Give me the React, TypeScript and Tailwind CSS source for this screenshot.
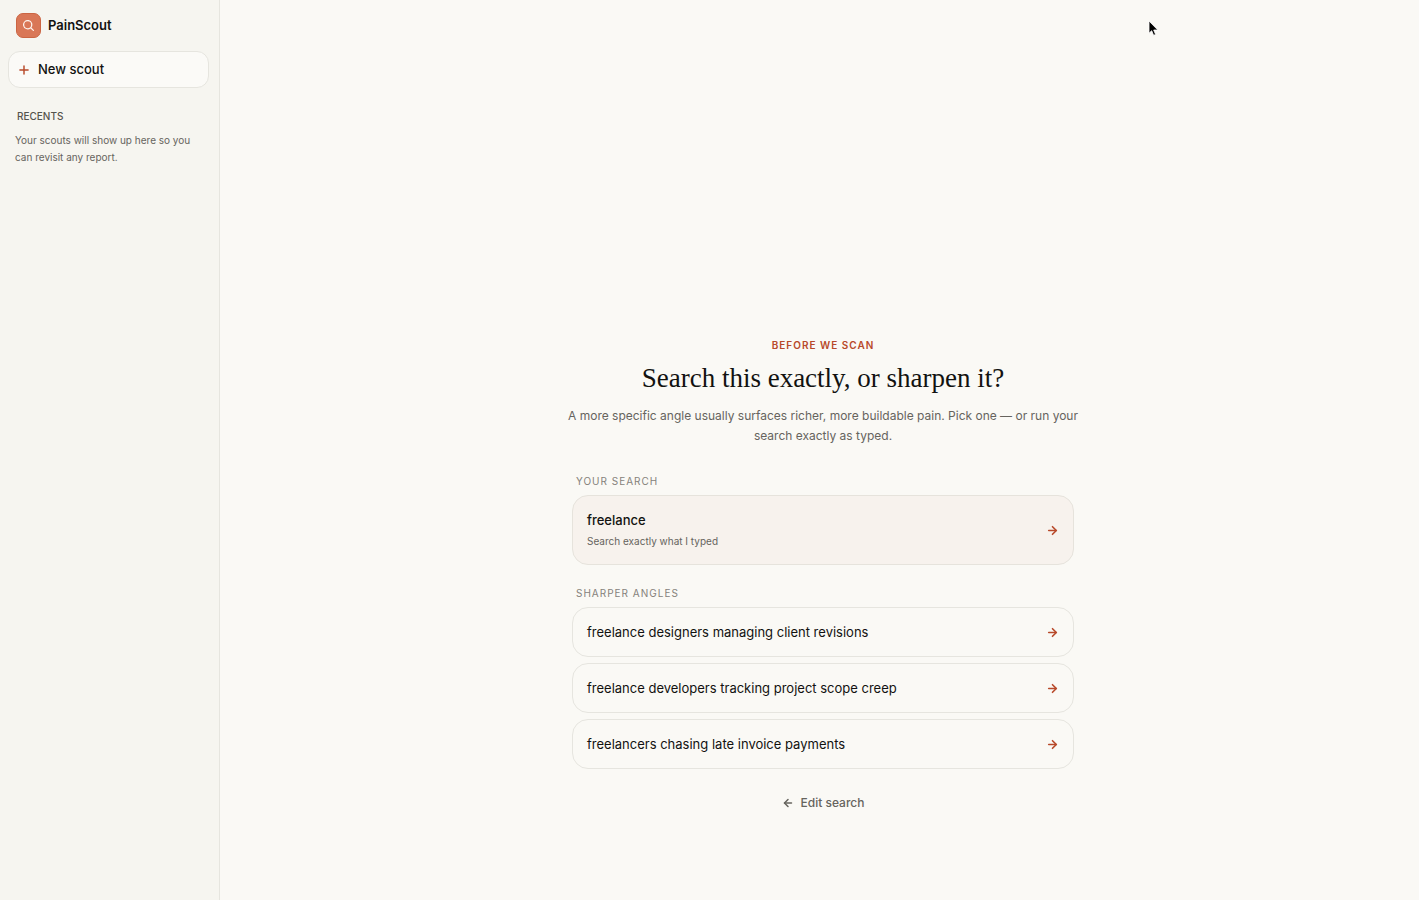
import React from "react";
import { ArrowLeft, ArrowRight, Plus } from "lucide-react";
import { PiMagnifyingGlassBold } from "react-icons/pi";

const angles = [
  "freelance designers managing client revisions",
  "freelance developers tracking project scope creep",
  "freelancers chasing late invoice payments",
];

function Sidebar() {
  return (
    <aside className="flex w-[220px] shrink-0 flex-col border-r border-[#e6e5df] bg-[#f6f5f0] px-2 pt-[13px]">
      <a href="#" className="flex items-center gap-[7px] px-2 text-[13px] leading-[25px] font-semibold">
        <span className="flex size-[25px] items-center justify-center rounded-[7px] border border-[#cb6543] bg-[#d97757] text-[#fdf3ee]">
          <PiMagnifyingGlassBold size={13} aria-hidden="true" />
        </span>
        PainScout
      </a>
      <button
        type="button"
        className="mt-[13px] mr-[2px] flex h-[37px] items-center gap-[7px] rounded-xl border border-[#e6e5df] bg-[#fbfaf7] px-2 text-[13px] font-medium"
      >
        <Plus size={14} strokeWidth={2.5} className="text-[#b8492a]" aria-hidden="true" />
        New scout
      </button>
      <h2 className="mt-5 px-[9px] text-[10px] leading-4 font-medium text-[#55534d]">RECENTS</h2>
      <p className="mt-2 pr-2 pl-[7px] text-[10px] leading-[17px] text-[#66645e]">
        Your scouts will show up here so you can revisit any report.
      </p>
    </aside>
  );
}

function SearchOption({ title, note }: { title: string; note?: string }) {
  return (
    <button
      type="button"
      className={
        note
          ? "flex h-[70px] w-full items-center justify-between rounded-2xl border border-[#e6e3dc] bg-[#f7f2ed] px-[14px] text-left"
          : "flex h-[50px] w-full items-center justify-between rounded-2xl border border-[#e6e5df] bg-[#faf9f5] px-[14px] text-left"
      }
    >
      <span className="flex flex-col gap-[3px]">
        <span className={note ? "text-[13px] leading-[18px] font-medium" : "text-[13px] leading-[18px]"}>
          {title}
        </span>
        {note && <span className="text-[10px] leading-[18px] text-[#66645e]">{note}</span>}
      </span>
      <ArrowRight size={13} strokeWidth={3} className="text-[#b8492a]" aria-hidden="true" />
    </button>
  );
}

export default function App() {
  return (
    <div className="relative flex min-h-screen bg-[#faf9f5] font-['Inter','Liberation_Sans',sans-serif] text-[#121210]">
      <Sidebar />
      <main className="flex flex-1 justify-center pt-[337px] pb-20 pl-[7px]">
        <div className="flex w-full max-w-[502px] flex-col">
          <p className="text-center text-[10px] leading-4 font-semibold tracking-[1px] text-[#b8492a]">
            BEFORE WE SCAN
          </p>
          <h1 className="mt-[9px] text-center font-['Liberation_Serif',serif] text-[27px] leading-8 font-medium">
            Search this exactly, or sharpen it?
          </h1>
          <p className="-mx-2 mt-3 text-center text-[12px] leading-5 text-[#66645e]">
            A more specific angle usually surfaces richer, more buildable pain. Pick one — or run your search exactly as
            typed.
          </p>

          <section className="mt-[27px]">
            <h2 className="px-1 text-[10px] leading-4 tracking-[1px] text-[#85827b]">YOUR SEARCH</h2>
            <div className="mt-[6px]">
              <SearchOption title="freelance" note="Search exactly what I typed" />
            </div>
          </section>

          <section className="mt-5">
            <h2 className="px-1 text-[10px] leading-4 tracking-[1px] text-[#85827b]">SHARPER ANGLES</h2>
            <ul className="mt-[6px] flex flex-col gap-[6px]">
              {angles.map((angle) => (
                <li key={angle}>
                  <SearchOption title={angle} />
                </li>
              ))}
            </ul>
          </section>

          <button
            type="button"
            className="mt-[25px] flex items-center gap-[7px] self-center text-[12px] leading-[18px] font-medium text-[#66645e]"
          >
            <ArrowLeft size={12} strokeWidth={3} aria-hidden="true" />
            Edit search
          </button>
        </div>
      </main>
      <svg
        className="pointer-events-none absolute top-5 left-[1148px] h-[17px] w-[11px]"
        viewBox="0 0 11 17"
        aria-hidden="true"
      >
        <path
          d="M1 1v12.2l2.7-2.5 1.9 4.6 2-.8-1.9-4.5h4.1z"
          fill="#000"
          stroke="#fff"
          strokeWidth="0.8"
          strokeLinejoin="round"
        />
      </svg>
    </div>
  );
}
